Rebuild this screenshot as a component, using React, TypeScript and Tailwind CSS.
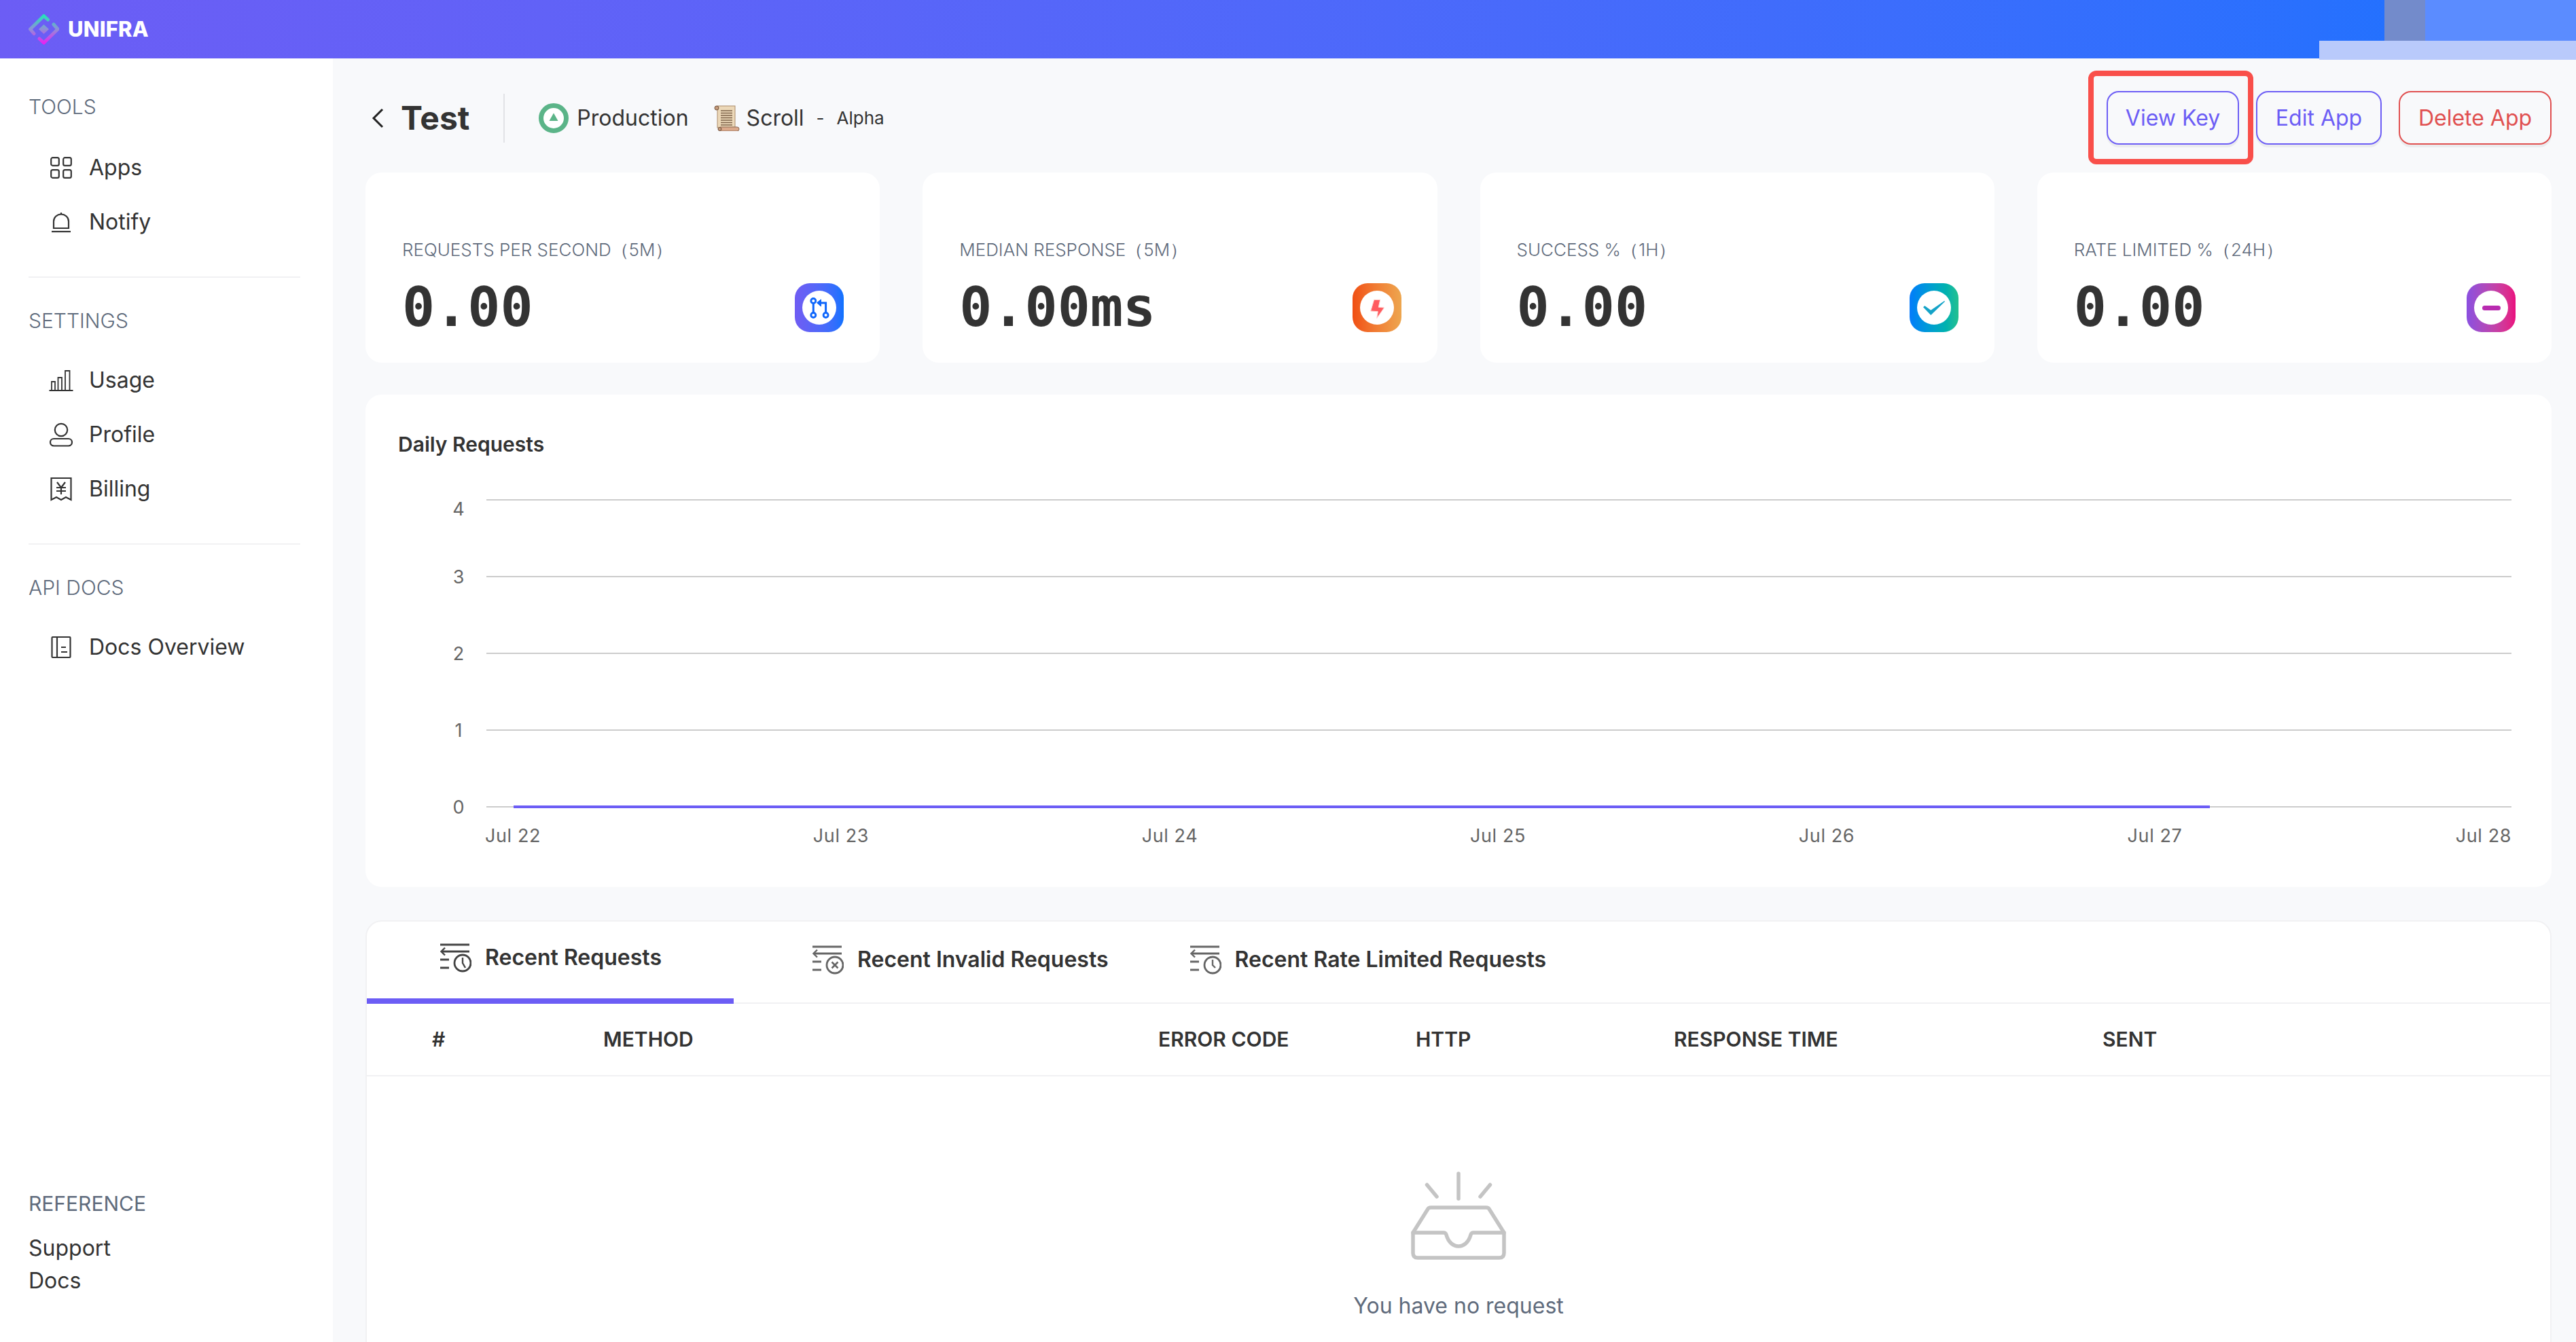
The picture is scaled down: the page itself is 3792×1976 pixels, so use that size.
import React from 'react';

const Logo = () => (
    <svg width="45" height="45" viewBox="0 0 45 45" fill="none">
        <defs>
            <linearGradient id="logoGrad" gradientUnits="userSpaceOnUse" x1="22" y1="0" x2="22" y2="44">
                <stop offset="0" stopColor="#1de9b6" />
                <stop offset="0.5" stopColor="#8f8fd8" />
                <stop offset="1" stopColor="#ee1cf2" />
            </linearGradient>
        </defs>
        <path d="M8 28.5 L2.5 22 L22.5 2.5 L28.5 8" stroke="url(#logoGrad)" strokeWidth="5" strokeLinecap="round" strokeLinejoin="round" />
        <path d="M37 15 L43 22 L22.5 42 L16 36" stroke="url(#logoGrad)" strokeWidth="5" strokeLinecap="round" strokeLinejoin="round" />
        <path d="M22.5 15 L30 22 L22.5 29 L15 22 Z" fill="url(#logoGrad)" />
    </svg>
);

const navIconProps = { width: 36, height: 36, viewBox: '0 0 36 36', fill: 'none', stroke: '#333', strokeWidth: 2.2 };

const AppsIcon = () => (
    <svg {...navIconProps}>
        <rect x="3.2" y="3.2" width="11.6" height="11.6" rx="2.4" />
        <rect x="21.2" y="3.2" width="11.6" height="11.6" rx="2.4" />
        <rect x="3.2" y="21.2" width="11.6" height="11.6" rx="2.4" />
        <rect x="21.2" y="21.2" width="11.6" height="11.6" rx="2.4" />
    </svg>
);

const BellIcon = () => (
    <svg {...navIconProps}>
        <path d="M7 27 V17 a11 10.5 0 0 1 22 0 V27 Z" />
        <path d="M18 4 V7" />
        <path d="M4 32 H32" />
    </svg>
);

const UsageIcon = () => (
    <svg {...navIconProps} strokeWidth={1.8}>
        <path d="M0.5 33 H35.5" />
        <path d="M4 33 V20 H9 V33" />
        <path d="M13.5 33 V14 H19 V33" />
        <path d="M24 33 V4 H30.5 V33" />
    </svg>
);

const ProfileIcon = () => (
    <svg {...navIconProps}>
        <circle cx="18" cy="11" r="9.2" />
        <rect x="2" y="24" width="32" height="10.5" rx="5.2" />
    </svg>
);

const BillingIcon = () => (
    <svg {...navIconProps}>
        <path d="M3.5 2 H32.5 V34 L25 30 L18 34 L11 30 L3.5 34 Z" />
        <path d="M12 8 L18 16 L24 8 M18 16 V26 M11 16 H25 M11 21 H25" />
    </svg>
);

const DocsIcon = () => (
    <svg {...navIconProps}>
        <rect x="4.5" y="3" width="27" height="30" rx="1" />
        <path d="M12 3 V33" />
        <path d="M18 18 H25 M18 25 H27" />
    </svg>
);

const ProductionIcon = () => (
    <svg width="44" height="44" viewBox="0 0 44 44">
        <circle cx="22" cy="22" r="18.5" fill="#fff" stroke="#5bb488" strokeWidth="7" />
        <path d="M22 14.5 L28.5 26 H15.5 Z" fill="#5bb488" />
    </svg>
);

const ScrollIcon = () => (
    <svg width="38" height="38" viewBox="0 0 38 38">
        <rect x="5" y="1" width="26" height="32" fill="#ecd8b8" stroke="#a98a68" strokeWidth="1" />
        <path d="M10 8 H27 M10 11.5 H27 M10 15 H27 M10 18.5 H27 M10 22 H27 M10 25.5 H27 M10 29 H27" stroke="#7c6148" strokeWidth="1.6" />
        <rect x="1" y="1" width="6" height="6" rx="3" fill="#c49a7a" stroke="#6f4f3a" strokeWidth="1" />
        <rect x="7" y="32" width="30" height="6" rx="3" fill="#dba98b" stroke="#8a6650" strokeWidth="1" />
        <circle cx="8.5" cy="35" r="2.5" fill="#c49a7a" stroke="#6f4f3a" strokeWidth="1" />
    </svg>
);

const GitIcon = () => (
    <svg width="50" height="50" viewBox="0 0 50 50" fill="none" stroke="#0f66fb">
        <path d="M16.3 18.5 V32.5" strokeWidth="3" />
        <path d="M34.6 32.5 V18 H26" strokeWidth="3" />
        <path d="M21.5 17.8 L27.5 13 V23 Z" fill="#0f66fb" strokeWidth="1" />
        <circle cx="16.3" cy="15" r="3.5" strokeWidth="2.8" fill="#fff" />
        <circle cx="16.3" cy="36" r="3.5" strokeWidth="2.8" fill="#fff" />
        <circle cx="34.6" cy="36" r="3.5" strokeWidth="2.8" fill="#fff" />
    </svg>
);

const BoltIcon = () => (
    <svg width="50" height="50" viewBox="0 0 50 50">
        <path d="M20.7 13.3 H29.7 L27.3 24.3 L35.7 25 L24.7 40.7 L26.3 30.7 L15.7 30 Z" fill="#ff5b5f" stroke="#ffd9d4" strokeWidth="1" strokeLinejoin="round" />
    </svg>
);

const CheckIcon = () => (
    <svg width="50" height="50" viewBox="0 0 50 50">
        <path d="M9 24.3 L11.3 22.3 L20.3 28.7 L40.3 15 L41 16 L20.3 36 Z" fill="#14a3c8" />
    </svg>
);

const MinusIcon = () => <div className="w-[27px] h-[7px] rounded-full bg-[#b82bb0]" />;

const TabIcon = ({ color, children }: { color: string; children: React.ReactNode }) => (
    <svg width="46" height="44" viewBox="0 0 46 44" fill="none" stroke={color} strokeWidth="3">
        <path d="M0 3 H43" />
        <path d="M2 13 H43" />
        <path d="M7 7.5 L1.5 13 L7 18.5" strokeWidth="2.4" />
        <path d="M0 25 H13" />
        <path d="M0 37 H13" />
        <circle cx="33" cy="30" r="12" strokeWidth="2.8" />
        {children}
    </svg>
);

const EmptyIcon = () => (
    <svg width="140" height="130" viewBox="0 0 140 130" fill="none" stroke="#c4c4c4" strokeWidth="5.5" strokeLinecap="round" strokeLinejoin="round">
        <path d="M70 3 V40" />
        <path d="M23.5 19.5 L38 37" />
        <path d="M116.5 19.5 L102 37" />
        <path d="M3 90 L25 55 Q26 53 29 53 H111 Q114 53 115 55 L137 90 V120 Q137 127 130 127 H10 Q3 127 3 120 Z" />
        <path d="M3 90 H48 Q51 90 52 93 C55 104 62 110 70 110 C78 110 85 104 88 93 Q89 90 92 90 H137" />
    </svg>
);

const NavItem = ({ icon, label }: { icon: React.ReactNode; label: string }) => (
    <div className="flex items-center h-[80px] pl-[30px] text-[32px] text-[#333]">
        <div className="w-[36px] flex justify-center">{icon}</div>
        <span className="ml-[23px]">{label}</span>
    </div>
);

const SectionLabel = ({ children }: { children: React.ReactNode }) => (
    <div className="h-[36px] leading-[36px] text-[30px] font-light text-[#5f6b7c]">{children}</div>
);

const Divider = () => <div className="mt-[40px] h-[2px] w-[400px] bg-[#f1f1f3]" />;

const stats = [
    { label: 'REQUESTS PER SECOND（5M）', value: '0.00', grad: 'from-[#6f5cf3] to-[#0a72ff]', icon: <GitIcon /> },
    { label: 'MEDIAN RESPONSE（5M）', value: '0.00ms', grad: 'from-[#f04e12] to-[#eda64f]', icon: <BoltIcon /> },
    { label: 'SUCCESS %（1H）', value: '0.00', grad: 'from-[#0a7bfb] to-[#22c08f]', icon: <CheckIcon /> },
    { label: 'RATE LIMITED %（24H）', value: '0.00', grad: 'from-[#8a4fe0] to-[#ea0a7e]', icon: <MinusIcon /> },
];

const StatCard = ({ label, value, grad, icon }: (typeof stats)[number]) => (
    <div className="h-[280px] rounded-[24px] bg-white pl-[54px] pr-[53px] pt-[96px]">
        <div className="h-[36px] leading-[36px] text-[26px] font-light text-[#5f6b7c] whitespace-nowrap">{label}</div>
        <div className="mt-[31px] flex items-center justify-between">
            <span className="font-['DejaVu_Sans_Mono',monospace] font-bold text-[80px] leading-[72px] text-[#333]">{value}</span>
            <div className={`w-[72px] h-[72px] rounded-[22px] bg-linear-to-r ${grad} flex items-center justify-center`}>
                <div className="w-[50px] h-[50px] rounded-full bg-white flex items-center justify-center">{icon}</div>
            </div>
        </div>
    </div>
);

const gridLines = [
    { y: 42, label: '4', labelY: 55 },
    { y: 155, label: '3', labelY: 155 },
    { y: 268, label: '2', labelY: 268 },
    { y: 381, label: '1', labelY: 381 },
    { y: 494, label: '0', labelY: 494 },
];

const xLabels = [
    { x: 217, label: 'Jul 22' },
    { x: 700, label: 'Jul 23' },
    { x: 1184, label: 'Jul 24' },
    { x: 1667, label: 'Jul 25' },
    { x: 2151, label: 'Jul 26' },
    { x: 2634, label: 'Jul 27' },
    { x: 3118, label: 'Jul 28' },
];

const DailyChart = () => (
    <svg width="3218" height="612" viewBox="0 0 3218 612" className="block w-full">
        {gridLines.map((g) => (
            <g key={g.label}>
                <line x1="178" x2="3159" y1={g.y} y2={g.y} stroke="#cccccc" strokeWidth="2" />
                <text x="137" y={g.labelY} dy="10" textAnchor="middle" fontSize="27" fill="#666">
                    {g.label}
                </text>
            </g>
        ))}
        <line x1="218" x2="2715" y1="494" y2="494" stroke="#6c5df5" strokeWidth="4" />
        {xLabels.map((l, i) => (
            <text key={l.label} x={i === 6 ? 3159 : l.x} y="546" textAnchor={i === 6 ? 'end' : 'middle'} fontSize="27" letterSpacing="0.6" fill="#666">
                {l.label}
            </text>
        ))}
    </svg>
);

const columns = [
    { label: '#', width: 'w-[252px]' },
    { label: 'METHOD', width: 'w-[817px]' },
    { label: 'ERROR CODE', width: 'w-[379px]' },
    { label: 'HTTP', width: 'w-[380px]' },
    { label: 'RESPONSE TIME', width: 'w-[631px]' },
    { label: 'SENT', width: 'w-[300px]' },
];

export default function App() {
    return (
        <div className="w-[3792px] h-[1976px] overflow-hidden flex flex-col bg-[#f8f9fb] font-[Inter,sans-serif] text-[#333]">
            <header className="relative h-[86px] shrink-0 flex items-center pl-[42px] bg-linear-to-r from-[#6c5df5] to-[#1572ff]">
                <Logo />
                <span className="ml-[13px] text-[31px] font-extrabold text-white tracking-[0.2px]">UNIFRA</span>
                {/* blurred-out account area */}
                <div className="absolute left-[3510px] top-0 w-[60px] h-[60px] bg-[#738bcb]" />
                <div className="absolute left-[3570px] top-0 w-[222px] h-[60px] bg-[#5b8cff]" />
                <div className="absolute left-[3414px] top-[60px] w-[378px] h-[28px] bg-[#b9cafb]" />
            </header>

            <div className="flex-1 flex min-h-0">
                <aside className="w-[490px] shrink-0 bg-white px-[42px] pt-[53px] pb-[66px] flex flex-col">
                    <SectionLabel>TOOLS</SectionLabel>
                    <div className="mt-[32px]">
                        <NavItem icon={<AppsIcon />} label="Apps" />
                        <NavItem icon={<BellIcon />} label="Notify" />
                    </div>
                    <Divider />
                    <div className="mt-[45px]">
                        <SectionLabel>SETTINGS</SectionLabel>
                    </div>
                    <div className="mt-[30px]">
                        <NavItem icon={<UsageIcon />} label="Usage" />
                        <NavItem icon={<ProfileIcon />} label="Profile" />
                        <NavItem icon={<BillingIcon />} label="Billing" />
                    </div>
                    <Divider />
                    <div className="mt-[45px]">
                        <SectionLabel>API DOCS</SectionLabel>
                    </div>
                    <div className="mt-[30px]">
                        <NavItem icon={<DocsIcon />} label="Docs Overview" />
                    </div>
                    <div className="mt-auto">
                        <div className="h-[36px] leading-[36px] text-[30px] text-[#5f6b7c]">REFERENCE</div>
                        <div className="mt-[24px] h-[48px] leading-[48px] text-[32px]">Support</div>
                        <div className="h-[48px] leading-[48px] text-[32px]">Docs</div>
                    </div>
                </aside>

                <main className="flex-1 min-w-0 pl-[48px] pr-[36px] pt-[48px]">
                    <div className="h-[79px] flex items-center justify-between">
                        <div className="flex items-center">
                            <svg width="20" height="32" viewBox="0 0 20 32" fill="none" stroke="#222" strokeWidth="3" className="ml-[8px]">
                                <path d="M17 3 L4 16 L17 29" />
                            </svg>
                            <span className="ml-[24px] text-[48px] font-bold leading-none">Test</span>
                            <div className="ml-[50px] w-[2px] h-[72px] bg-[#e2e3e6]" />
                            <div className="ml-[50px]">
                                <ProductionIcon />
                            </div>
                            <span className="ml-[12px] text-[32px]">Production</span>
                            <div className="ml-[37px]">
                                <ScrollIcon />
                            </div>
                            <span className="ml-[10px] text-[32px]">Scroll</span>
                            <span className="ml-[18px] text-[26px]">-</span>
                            <span className="ml-[18px] text-[26px]">Alpha</span>
                        </div>
                        <div className="flex items-center gap-[25px]">
                            <div className="relative">
                                <button className="w-[195px] h-[79px] rounded-[18px] border-2 border-[#6c5df5] text-[#6c5df5] text-[32px] shadow-[0_4px_0_rgba(0,0,0,0.05)]">View Key</button>
                                <div className="absolute -left-[27px] -right-[21px] -top-[30px] -bottom-[29px] border-[8px] border-[#f94f4a] rounded-[12px]" />
                            </div>
                            <button className="w-[185px] h-[79px] rounded-[18px] border-2 border-[#6c5df5] text-[#6c5df5] text-[32px] shadow-[0_4px_0_rgba(0,0,0,0.05)]">Edit App</button>
                            <button className="w-[225px] h-[79px] rounded-[18px] border-2 border-[#e05050] text-[#e05050] text-[32px] shadow-[0_4px_0_rgba(0,0,0,0.05)]">Delete App</button>
                        </div>
                    </div>

                    <div className="mt-[41px] grid grid-cols-4 gap-[63px]">
                        {stats.map((s) => (
                            <StatCard key={s.label} {...s} />
                        ))}
                    </div>

                    <section className="mt-[47px] h-[725px] rounded-[24px] bg-white overflow-hidden">
                        <div className="pt-[53px] pl-[48px] h-[113px]">
                            <div className="h-[40px] leading-[40px] text-[30px] font-semibold">Daily Requests</div>
                        </div>
                        <DailyChart />
                    </section>

                    <section className="mt-[49px] h-[700px] rounded-t-[24px] bg-white border-2 border-[#f1f1f3]">
                        <div className="flex h-[121px] border-b-2 border-[#f1f1f3]">
                            <div className="w-[540px] h-[121px] border-b-[8px] border-[#6c5df5] flex items-center pl-[108px] pb-[8px] -mb-[2px] text-[32px] font-semibold">
                                <TabIcon color="#444">
                                    <path d="M33 22 V30 L37 37" strokeWidth="2.4" />
                                </TabIcon>
                                <span className="ml-[20px]">Recent Requests</span>
                            </div>
                            <div className="ml-[116px] flex items-center pb-[8px] text-[32px] font-semibold">
                                <TabIcon color="#666">
                                    <path d="M28.5 25.5 L37.5 34.5 M37.5 25.5 L28.5 34.5" strokeWidth="2.6" />
                                </TabIcon>
                                <span className="ml-[20px]">Recent Invalid Requests</span>
                            </div>
                            <div className="ml-[120px] flex items-center pb-[8px] text-[32px] font-semibold">
                                <TabIcon color="#666">
                                    <path d="M33 22 V30 L37 34" strokeWidth="2.4" />
                                </TabIcon>
                                <span className="ml-[20px]">Recent Rate Limited Requests</span>
                            </div>
                        </div>
                        <div className="flex items-center h-[107px] pl-[96px] border-b-2 border-[#f1f1f3] text-[30px] font-semibold">
                            {columns.map((c) => (
                                <div key={c.label} className={c.width}>
                                    {c.label}
                                </div>
                            ))}
                        </div>
                        <div className="pt-[140px] flex flex-col items-center">
                            <EmptyIcon />
                            <div className="mt-[44px] text-[32px] text-[#5f6b7c]">You have no request</div>
                        </div>
                    </section>
                </main>
            </div>
        </div>
    );
}
